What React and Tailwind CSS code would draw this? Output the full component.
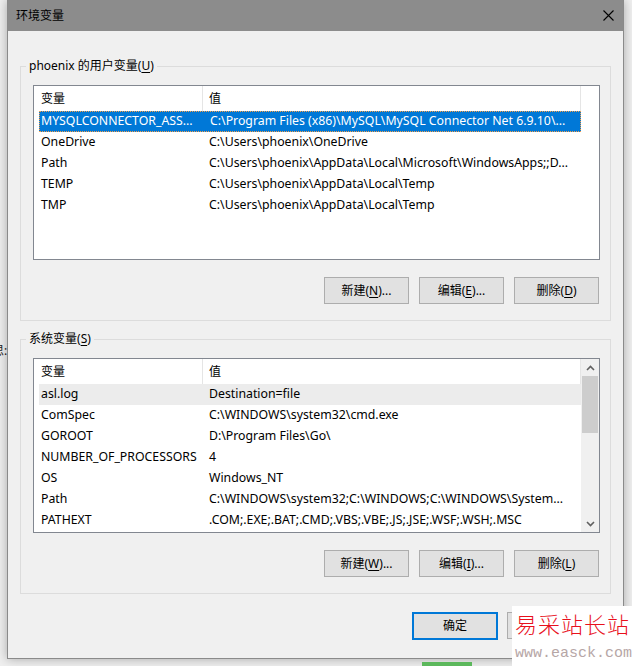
const font = { fontFamily: '"Noto Sans", "Noto Sans CJK SC", sans-serif' }

const userVars = [
  ['MYSQLCONNECTOR_ASS...', 'C:\\Program Files (x86)\\MySQL\\MySQL Connector Net 6.9.10\\...'],
  ['OneDrive', 'C:\\Users\\phoenix\\OneDrive'],
  ['Path', 'C:\\Users\\phoenix\\AppData\\Local\\Microsoft\\WindowsApps;;D...'],
  ['TEMP', 'C:\\Users\\phoenix\\AppData\\Local\\Temp'],
  ['TMP', 'C:\\Users\\phoenix\\AppData\\Local\\Temp'],
]

const systemVars = [
  ['asl.log', 'Destination=file'],
  ['ComSpec', 'C:\\WINDOWS\\system32\\cmd.exe'],
  ['GOROOT', 'D:\\Program Files\\Go\\'],
  ['NUMBER_OF_PROCESSORS', '4'],
  ['OS', 'Windows_NT'],
  ['Path', 'C:\\WINDOWS\\system32;C:\\WINDOWS;C:\\WINDOWS\\System...'],
  ['PATHEXT', '.COM;.EXE;.BAT;.CMD;.VBS;.VBE;.JS;.JSE;.WSF;.WSH;.MSC'],
]

function Chevron({ down }) {
  return (
    <svg width="9" height="6" viewBox="0 0 9 6">
      <polyline
        points={down ? '1,1 4.5,4.5 8,1' : '1,5 4.5,1.5 8,5'}
        fill="none"
        stroke="#606060"
        strokeWidth="1.6"
      />
    </svg>
  )
}

function VarList({ rows, active, selected, scroll }) {
  return (
    <div className="flex h-[175px] w-[567px] border border-[#828790] bg-white">
      <div className="flex w-[547px] flex-col overflow-hidden">
        <div className="flex h-[25px] shrink-0 items-center">
          <div className="flex h-full w-[169px] items-center border-r border-[#e5e5e5] pl-[7px]">变量</div>
          <div className="flex h-full w-[378px] items-center border-r border-[#e5e5e5] pl-[6px]">值</div>
        </div>
        {rows.map(([name, value], i) => {
          const isSel = selected && i === active
          const isHover = !selected && i === active
          return (
            <div
              key={name + i}
              className={
                'ml-[5px] flex h-[21px] w-[542px] shrink-0 items-center whitespace-nowrap text-[12.3px] ' +
                (isSel
                  ? 'border border-dotted border-[#f5a04a] bg-[#0078d7] text-white'
                  : isHover
                    ? 'bg-[#ececec]'
                    : '')
              }
            >
              <div className={'w-[164px] overflow-hidden ' + (isSel ? 'pl-[1px]' : 'pl-[2px]')}>{name}</div>
              <div className="flex-1 overflow-hidden pl-[6px]">{value}</div>
            </div>
          )
        })}
      </div>
      {scroll && (
        <div className="flex w-[18px] flex-col bg-[#f0f0f0]">
          <div className="flex h-[17px] items-center justify-center">
            <Chevron />
          </div>
          <div className="mx-[1px] h-[57px] bg-[#cdcdcd]" />
          <div className="flex-1" />
          <div className="flex h-[17px] items-center justify-center">
            <Chevron down />
          </div>
        </div>
      )}
    </div>
  )
}

function Button({ label, mnemonic, tail, primary }) {
  return (
    <div
      className={
        'flex h-[27px] w-[85px] items-center justify-center bg-[#e1e1e1] ' +
        (primary ? 'h-[28px] w-[86px] border-2 border-[#0078d7]' : 'border border-[#adadad]')
      }
    >
      {label}
      {mnemonic && (
        <>
          (<span className="underline underline-offset-2">{mnemonic}</span>){tail}
        </>
      )}
    </div>
  )
}

function Group({ title, mnemonic, rows, active, selected, scroll, buttons, top }) {
  return (
    <div className={'relative border border-[#dcdcdc] pl-[12px] pt-[18px] ' + top}>
      <div className="absolute -top-[9px] left-[5px] bg-[#f0f0f0] px-[3px] leading-[16px]">
        {title}(<span className="underline underline-offset-2">{mnemonic}</span>)
      </div>
      <VarList rows={rows} active={active} selected={selected} scroll={scroll} />
      <div className="mt-[17px] flex justify-end gap-[10px] pb-[16px] pr-[11px]">
        {buttons.map(([label, key, tail]) => (
          <Button key={label} label={label} mnemonic={key} tail={tail} />
        ))}
      </div>
    </div>
  )
}

export default function App() {
  return (
    <div className="relative h-[666px] w-[632px] overflow-hidden bg-[#efefef] text-[12px] text-black" style={font}>
      <span className="absolute left-[-8px] top-[342px] text-[12px] text-[#222]">思:</span>
      <div className="absolute left-[7px] top-0 flex h-[659px] w-[617px] flex-col border-x border-b border-[#8a8a8a] shadow-[0_0_10px_rgba(0,0,0,0.3)]">
        <div className="flex h-[31px] shrink-0 items-center justify-between bg-[#8c8c8c] pl-[8px] pr-[9px]">
          <span>环境变量</span>
          <svg width="11" height="11" viewBox="0 0 11 11">
            <path d="M0.5 0.5 L10.5 10.5 M10.5 0.5 L0.5 10.5" stroke="#000" strokeWidth="1.1" />
          </svg>
        </div>
        <div className="flex flex-1 flex-col bg-[#f0f0f0] px-[12px]">
          <Group
            top="mt-[35px]"
            title="phoenix 的用户变量"
            mnemonic="U"
            rows={userVars}
            active={0}
            selected
            buttons={[
              ['新建', 'N', '...'],
              ['编辑', 'E', '...'],
              ['删除', 'D', ''],
            ]}
          />
          <Group
            top="mt-[18px]"
            title="系统变量"
            mnemonic="S"
            rows={systemVars}
            active={0}
            scroll
            buttons={[
              ['新建', 'W', '...'],
              ['编辑', 'I', '...'],
              ['删除', 'L', ''],
            ]}
          />
          <div className="mt-[18px] flex items-start justify-end gap-[9px] pr-[19px]">
            <Button label="确定" primary />
            <Button label="" />
          </div>
        </div>
      </div>
      <div className="absolute left-[422px] top-[662px] h-[4px] w-[50px] bg-[#5cb85c]" />
      <div className="absolute left-[512px] top-[606px] flex h-[60px] w-[120px] flex-col bg-white pl-[3px]">
        <div className="mt-[3px] whitespace-nowrap text-[22px] font-extralight leading-[28px] tracking-[1px] text-[#e8101c]" style={{ fontFamily: '"Noto Sans CJK SC", sans-serif' }}>
          易采站长站
        </div>
        <div className="mt-[9px] whitespace-nowrap text-[15px] leading-[16px] text-[#b6a6a6]" style={{ fontFamily: '"Liberation Mono", monospace' }}>
          www.easck.com
        </div>
      </div>
    </div>
  )
}
